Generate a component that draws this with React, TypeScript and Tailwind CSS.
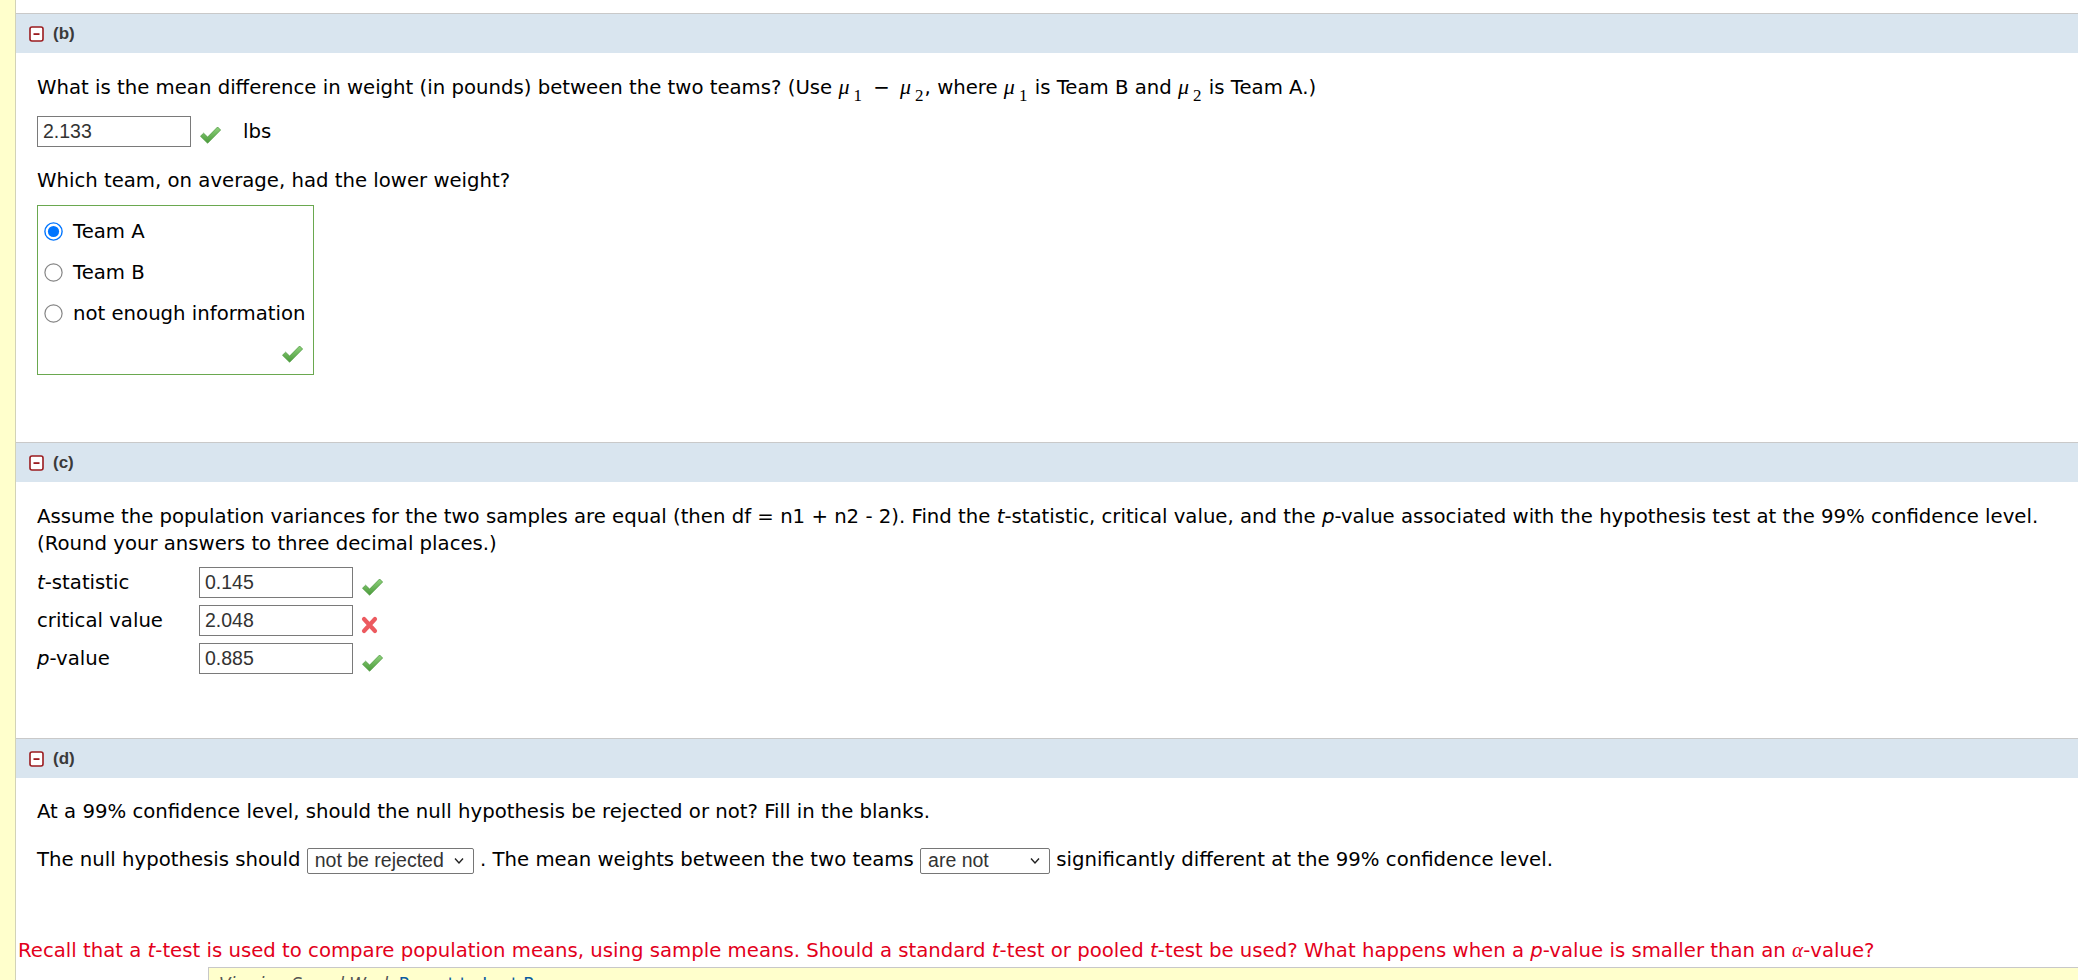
const sans = "font-['DejaVu_Sans',Verdana,sans-serif]";
const arial = "font-['Liberation_Sans',Arial,sans-serif]";
const serif = "font-['Liberation_Serif','Times_New_Roman',serif]";

function MinusIcon() {
  return (
    <svg width="15" height="16" viewBox="0 0 15 16" className="shrink-0">
      <rect x="1" y="1" width="13" height="14" rx="2" fill="#fff" stroke="#9b1b1f" strokeWidth="1.6" />
      <rect x="4.5" y="7.2" width="6" height="1.8" fill="#9b1b1f" />
    </svg>
  );
}

function Check() {
  return (
    <svg width="23" height="20" viewBox="0 0 23 20" className="shrink-0">
      <defs>
        <linearGradient id="chk" x1="0" y1="0" x2="0" y2="1">
          <stop offset="0" stopColor="#8fd27c" />
          <stop offset="1" stopColor="#4a9a3a" />
        </linearGradient>
      </defs>
      <path d="M1.5 11.2 L4.6 8.2 L8.6 12.1 L18.6 2 L21.6 5 L8.6 18.2 Z" fill="url(#chk)" stroke="#4f9a41" strokeWidth="0.8" strokeLinejoin="round" />
    </svg>
  );
}

function Cross() {
  return (
    <svg width="17" height="18" viewBox="0 0 17 18" className="shrink-0">
      <path d="M3 3 L14 15 M14 3 L3 15" stroke="#ec5a5f" strokeWidth="4.2" strokeLinecap="round" />
    </svg>
  );
}

function Radio({ checked }: { checked?: boolean }) {
  return checked ? (
    <svg width="19" height="19" viewBox="0 0 19 19" className="shrink-0">
      <circle cx="9.5" cy="9.5" r="8.6" fill="#fff" stroke="#0075ff" strokeWidth="1.4" />
      <circle cx="9.5" cy="9.5" r="5.6" fill="#0075ff" />
    </svg>
  ) : (
    <svg width="19" height="19" viewBox="0 0 19 19" className="shrink-0">
      <circle cx="9.5" cy="9.5" r="8.6" fill="#fff" stroke="#858585" strokeWidth="1.2" />
    </svg>
  );
}

function SectionHeader({ label }: { label: string }) {
  return (
    <div className="h-[40px] border-t border-[#c9c9c9] bg-[#d9e5ef] flex items-center gap-[9px] pl-[13px]">
      <MinusIcon />
      <span className={`${arial} text-[17px] font-bold text-[#3a3a3a]`}>{label}</span>
    </div>
  );
}

function Box({ value }: { value: string }) {
  return (
    <div className={`w-[154px] h-[31px] shrink-0 border border-[#7a7a7a] bg-white flex items-center pl-[5px] ${arial} text-[19.5px] text-[#333]`}>
      {value}
    </div>
  );
}

function Dropdown({ value, width }: { value: string; width: string }) {
  return (
    <span className={`${width} h-[26px] inline-flex items-center justify-between align-middle border border-[#767676] rounded-[2px] bg-white pl-[7px] pr-[9px] ${arial} text-[19.5px] text-[#333] leading-none`}>
      <span>{value}</span>
      <svg width="10" height="8" viewBox="0 0 10 8">
        <path d="M1 1.5 L5 6 L9 1.5" fill="none" stroke="#222" strokeWidth="1.4" />
      </svg>
    </span>
  );
}

const Mu = ({ sub }: { sub: string }) => (
  <span className={`${serif} whitespace-nowrap leading-none`}>
    <i className="text-[22px] leading-none">μ</i>
    <span className="ml-[4px] mr-[1px] text-[17px] leading-none relative top-[7px]">{sub}</span>
  </span>
);

export default function App() {
  return (
    <div className={`flex min-h-screen bg-white text-black ${sans} text-[19.7px] leading-[27px]`}>
      <div className="w-[16px] shrink-0 bg-[#ffffcc] border-r border-[#d2d2b8]" />
      <div className="flex-1 pt-[13px]">
        <SectionHeader label="(b)" />
        <div className="pl-[21px] pt-[21px] pb-[67px]">
          <p className="whitespace-nowrap h-[27px]">
            What is the mean difference in weight (in pounds) between the two teams? (Use <Mu sub="1" /> <span className="mx-[4px]">−</span> <Mu sub="2" />, where <Mu sub="1" /> is Team B and <Mu sub="2" /> is Team A.)
          </p>
          <div className="mt-[15px] flex items-center">
            <Box value="2.133" />
            <span className="ml-[8px] mt-[6px]"><Check /></span>
            <span className="ml-[21px]">lbs</span>
          </div>
          <p className="mt-[20px]">Which team, on average, had the lower weight?</p>
          <div className="mt-[11px] w-[277px] border border-[#6aa84f] pl-[6px] pt-[5px] pb-[10px]">
            {[
              ['Team A', true],
              ['Team B', false],
              ['not enough information', false],
            ].map(([label, on]) => (
              <div key={label as string} className="h-[41px] flex items-center gap-[10px]">
                <Radio checked={on as boolean} />
                <span>{label as string}</span>
              </div>
            ))}
            <div className="mt-[10px] flex justify-end pr-[9px]">
              <Check />
            </div>
          </div>
        </div>

        <SectionHeader label="(c)" />
        <div className="pl-[21px] pt-[21px] pb-[64px]">
          <p className="whitespace-nowrap">
            Assume the population variances for the two samples are equal (then df = n1 + n2 - 2). Find the <i>t</i>-statistic, critical value, and the <i>p</i>-value associated with the hypothesis test at the 99% confidence level.
            <br />
            (Round your answers to three decimal places.)
          </p>
          <div className="mt-[10px] flex flex-col gap-[7px]">
            {[
              [<><i>t</i>-statistic</>, '0.145', true],
              [<>critical value</>, '2.048', false],
              [<><i>p</i>-value</>, '0.885', true],
            ].map(([label, val, ok], i) => (
              <div key={i} className="flex items-center">
                <span className="w-[162px] shrink-0">{label}</span>
                <Box value={val as string} />
                <span className="ml-[8px] mt-[8px]">{ok ? <Check /> : <Cross />}</span>
              </div>
            ))}
          </div>
        </div>

        <SectionHeader label="(d)" />
        <div className="pl-[21px] pt-[20px]">
          <p>At a 99% confidence level, should the null hypothesis be rejected or not? Fill in the blanks.</p>
          <p className="mt-[21px] whitespace-nowrap">
            The null hypothesis should <Dropdown value="not be rejected" width="w-[167px]" /> . The mean weights between the two teams{' '}
            <Dropdown value="are not" width="w-[130px]" /> significantly different at the 99% confidence level.
          </p>
        </div>

        <p className="mt-[63px] pl-[2px] text-[#e3001b] whitespace-nowrap">
          Recall that a <i>t</i>-test is used to compare population means, using sample means. Should a standard <i>t</i>-test or pooled <i>t</i>-test be used? What happens when a <i>p</i>-value is smaller than an <i className={`${serif} text-[21px] leading-none`}>α</i>-value?
        </p>
        <div className="ml-[192px] mt-[3px] border-t border-l border-[#c8c8c8] bg-[#ffffcc] pl-[10px] pt-[4px] pb-[20px] text-[17px] leading-[24px]">
          <i className="text-[#555]">Viewing Saved Work</i> <span className="text-[#0a5aa0] underline">Revert to Last Response</span>
        </div>
      </div>
    </div>
  );
}
